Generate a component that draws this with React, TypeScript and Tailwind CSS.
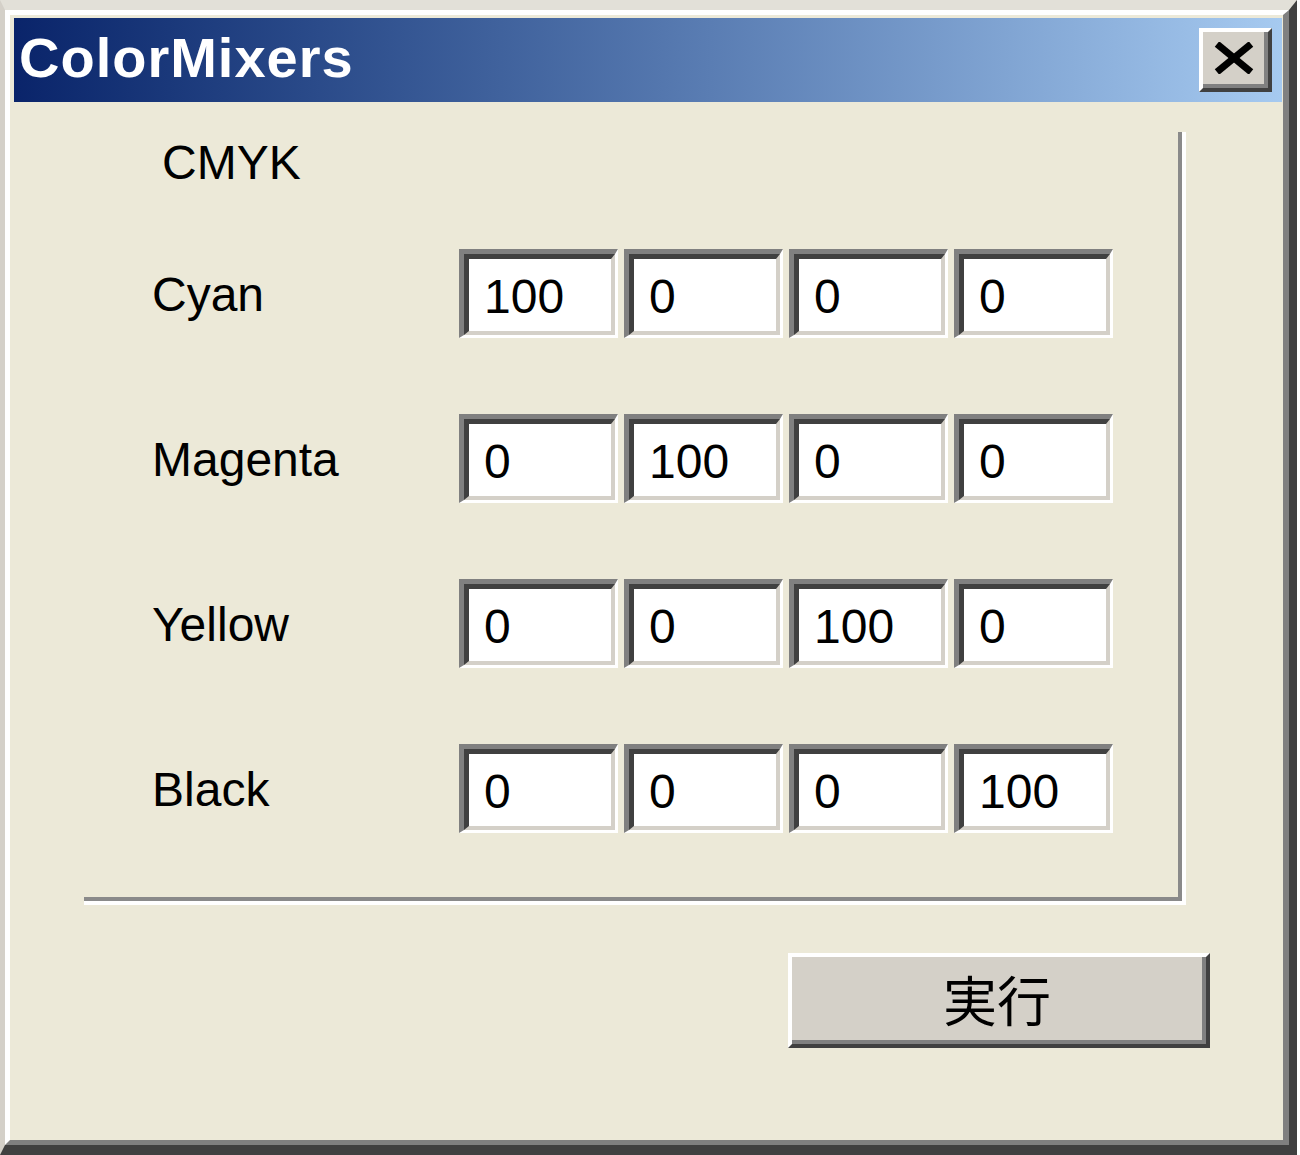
import React from "react";

const ROWS = [
  { label: "Cyan", values: ["100", "0", "0", "0"] },
  { label: "Magenta", values: ["0", "100", "0", "0"] },
  { label: "Yellow", values: ["0", "0", "100", "0"] },
  { label: "Black", values: ["0", "0", "0", "100"] },
];

const sans = { fontFamily: '"Liberation Sans", Arial, sans-serif' };

function Field({ value }: { value: string }) {
  return (
    <div className="w-[159px] h-[89px] border-t-[5px] border-l-[5px] border-t-[#808080] border-l-[#808080] border-b-[3px] border-r-[3px] border-b-white border-r-white">
      <div className="w-full h-full bg-white border-t-[5px] border-l-[5px] border-t-[#404040] border-l-[#404040] border-b-[4px] border-r-[4px] border-b-[#d4d0c8] border-r-[#d4d0c8] flex items-center pl-[15px]">
        <span className="text-[48px] leading-[48px] text-black pt-[3px]" style={sans}>
          {value}
        </span>
      </div>
    </div>
  );
}

export default function App() {
  return (
    <div className="w-[1300px] h-[1155px] bg-white overflow-hidden">
      {/* window frame */}
      <div className="w-[1297px] h-[1155px] border-t-[10px] border-l-[5px] border-t-[#e2e0d8] border-l-[#d4d0c8] border-r-[8px] border-b-[10px] border-r-[#404040] border-b-[#404040]">
        <div className="w-full h-full border-t-[5px] border-l-[5px] border-t-white border-l-white border-r-[6px] border-b-[5px] border-r-[#808080] border-b-[#808080] bg-[#ece9d8] pt-[3px] pl-[4px] pr-[1px] flex flex-col">
          {/* title bar */}
          <div className="h-[84px] shrink-0 flex items-center justify-between bg-gradient-to-r from-[#0a246a] to-[#a6caf0]">
            <span
              className="pl-[5px] pb-[5px] text-[56px] leading-[56px] font-bold text-white tracking-[1px]"
              style={sans}
            >
              ColorMixers
            </span>
            <div className="mr-[10px] w-[73px] h-[64px] border-t-[4px] border-l-[4px] border-t-white border-l-white border-r-[4px] border-b-[4px] border-r-[#404040] border-b-[#404040]">
              <div className="w-full h-full bg-[#d4d0c8] border-r-[4px] border-b-[4px] border-r-[#808080] border-b-[#808080] flex items-center justify-center">
                <svg width="40" height="32" viewBox="0 0 40 32">
                  <line x1="3" y1="2" x2="37" y2="30" stroke="#000" strokeWidth="7" />
                  <line x1="37" y1="2" x2="3" y2="30" stroke="#000" strokeWidth="7" />
                </svg>
              </div>
            </div>
          </div>

          {/* body */}
          <div className="flex-1 flex flex-col">
            {/* group box (etched right/bottom edges) */}
            <div className="mt-[30px] ml-[70px] w-[1102px] h-[773px] border-r-[4px] border-b-[4px] border-r-white border-b-white">
              <div className="w-full h-full border-r-[4px] border-b-[4px] border-r-[#8a8a8a] border-b-[#8a8a8a] flex flex-col">
                <span className="mt-[7px] ml-[78px] text-[48px] leading-[48px] text-black" style={sans}>
                  CMYK
                </span>
                <div className="mt-[62px] flex flex-col gap-[76px]">
                  {ROWS.map((row) => (
                    <div key={row.label} className="flex items-center h-[89px]">
                      <span
                        className="ml-[68px] w-[307px] text-[48px] leading-[48px] text-black pt-[3px]"
                        style={sans}
                      >
                        {row.label}
                      </span>
                      <div className="flex gap-[6px]">
                        {row.values.map((v, i) => (
                          <Field key={i} value={v} />
                        ))}
                      </div>
                    </div>
                  ))}
                </div>
              </div>
            </div>

            {/* action button */}
            <button className="mt-[48px] ml-[774px] w-[422px] h-[95px] border-t-[4px] border-l-[4px] border-t-white border-l-white border-r-[4px] border-b-[4px] border-r-[#404040] border-b-[#404040] p-0">
              <div className="w-full h-full bg-[#d4d0c8] border-r-[4px] border-b-[4px] border-r-[#808080] border-b-[#808080] flex items-center justify-center">
                <span
                  className="text-[54px] leading-[54px] text-black"
                  style={{ fontFamily: '"Noto Sans CJK JP", "Noto Sans CJK SC", sans-serif' }}
                >
                  実行
                </span>
              </div>
            </button>
          </div>
        </div>
      </div>
    </div>
  );
}
